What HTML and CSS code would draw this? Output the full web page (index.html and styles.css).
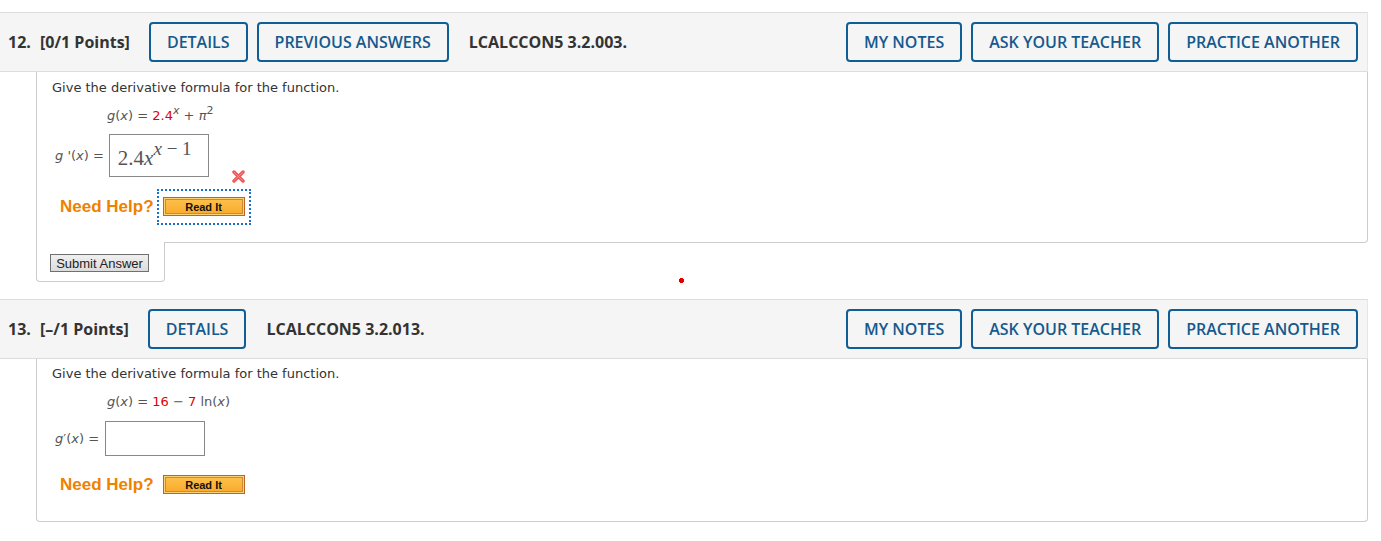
FILE: index.html
```html
<!DOCTYPE html>
<html>
<head>
<meta charset="utf-8">
<link rel="stylesheet" href="styles.css">
</head>
<body>
<div class="page">
  <div class="question">
    <div class="qhead">
      <span class="qnum">12.</span>
      <span class="qpts">[0/1 Points]</span>
      <div class="btns">
        <a class="btn">DETAILS</a>
        <a class="btn">PREVIOUS ANSWERS</a>
      </div>
      <span class="qcode">LCALCCON5 3.2.003.</span>
      <div class="btns right">
        <a class="btn">MY NOTES</a>
        <a class="btn">ASK YOUR TEACHER</a>
        <a class="btn">PRACTICE ANOTHER</a>
      </div>
    </div>
    <div class="qbody has-submit">
      <p class="intro">Give the derivative formula for the function.</p>
      <p class="formula"><i>g</i>(<i>x</i>) = <span class="red">2.4</span><sup><i>x</i></sup> + <i>π</i><sup>2</sup></p>
      <div class="answer first">
        <span class="label"><i>g</i> '(<i>x</i>) =</span>
        <span class="input tall"><span class="math">2.4<i>x</i><sup><i>x</i> − 1</sup></span></span>
        <svg class="wrong" width="13" height="13" viewBox="0 0 13 13">
          <path d="M2 2 L11 11 M11 2 L2 11" stroke="#ee5656" stroke-width="3.4" stroke-linecap="round"/>
          <path d="M2.3 2.3 L10.5 10.5 M10.5 2.3 L2.3 10.5" stroke="#f88a8a" stroke-width="1" stroke-linecap="round"/>
        </svg>
      </div>
      <div class="help first">
        <span class="needhelp">Need Help?</span>
        <span class="readlink focused"><span class="readit">Read It</span></span>
      </div>
    </div>
    <div class="submit-tab">
      <button class="submit">Submit Answer</button>
    </div>
  </div>

  <div class="question second">
    <div class="qhead">
      <span class="qnum">13.</span>
      <span class="qpts">[–/1 Points]</span>
      <div class="btns">
        <a class="btn">DETAILS</a>
      </div>
      <span class="qcode">LCALCCON5 3.2.013.</span>
      <div class="btns right">
        <a class="btn">MY NOTES</a>
        <a class="btn">ASK YOUR TEACHER</a>
        <a class="btn">PRACTICE ANOTHER</a>
      </div>
    </div>
    <div class="qbody last">
      <p class="intro">Give the derivative formula for the function.</p>
      <p class="formula"><i>g</i>(<i>x</i>) = <span class="red">16</span> − <span class="red">7</span> ln(<i>x</i>)</p>
      <div class="answer">
        <span class="label"><i>g</i>′(<i>x</i>) =</span>
        <span class="input short"></span>
      </div>
      <div class="help">
        <span class="needhelp">Need Help?</span>
        <span class="readlink"><span class="readit">Read It</span></span>
      </div>
    </div>
  </div>
</div>
<span class="cursor-dot"></span>
</body>
</html>
```

FILE: styles.css
```css
* { box-sizing: border-box; }
html, body { margin: 0; padding: 0; background: #fff; }
body { position: relative; }
.page { width: 1368px; padding-top: 12px; }

.question.second { margin-top: 17px; }

.qhead {
  display: flex;
  align-items: center;
  height: 60px;
  background: #f5f5f5;
  border-top: 1px solid #dddddd;
  border-bottom: 1px solid #dddddd;
  border-right: 1px solid #e6e6e6;
  padding: 0 9px 0 8px;
  font-family: "Open Sans", sans-serif;
  color: #333;
}
.qnum { font-weight: 700; font-size: 16px; width: 32px; }
.qpts { font-weight: 700; font-size: 16px; margin-right: 19px; }
.qcode { font-weight: 700; font-size: 16px; color: #333; margin-left: 20px; }
.btns { display: flex; gap: 9px; }
.btns.right { margin-left: auto; }
.btn {
  display: flex;
  align-items: center;
  height: 40px;
  padding: 0 16px;
  border: 2px solid #0f5f96;
  border-radius: 4px;
  color: #17598c;
  font-size: 16px;
  font-weight: 600;
  background: #f5f5f5;
}

.qbody {
  margin-left: 36px;
  border: 1px solid #cccccc;
  border-top: none;
  padding: 8px 15px 17px 15px;
  font-family: "DejaVu Sans", Verdana, sans-serif;
  font-size: 13px;
  color: #333;
  background: #fff;
}
.qbody.has-submit { border-bottom-right-radius: 4px; }
.qbody.last { border-radius: 0 0 4px 4px; padding-bottom: 18px; }
.question.second .qbody { padding-top: 7px; }

.intro { margin: 0; line-height: 16px; color: #333; }
.formula {
  margin: 11px 0 0 55px;
  line-height: 18px;
  color: #555;
}
.formula i { font-style: italic; }
.formula sup { font-size: 11px; line-height: 0; vertical-align: 6px; }
.red { color: #e00000; }

.answer {
  display: flex;
  align-items: center;
  margin-top: 10px;
  color: #555;
}
.answer.first { margin-top: 9px; }
.label { margin-left: 3px; margin-right: 5px; }
.label i { font-style: italic; }
.answer .label + .input.short { margin-left: 1px; }
.input {
  display: flex;
  align-items: center;
  border: 1px solid #888;
  background: #fff;
}
.input.tall { width: 100px; height: 43px; padding-left: 8px; }
.input.short { width: 100px; height: 35px; }
.math {
  font-family: "Liberation Serif", "Times New Roman", serif;
  font-size: 21px;
  color: #555;
  margin-top: 6px;
  white-space: nowrap;
}
.math sup { font-size: 19px; line-height: 0; vertical-align: 10px; }
.wrong {
  align-self: flex-end;
  margin: 0 0 -6px 23px;
  flex: none;
}

.help {
  display: flex;
  align-items: center;
  margin-top: 11px;
}
.help.first { margin-top: 12px; }
.needhelp {
  margin-left: 8px;
  font-family: "Liberation Sans", Arial, sans-serif;
  font-weight: 700;
  font-size: 17px;
  color: #ee8200;
}
.readlink {
  margin-left: 3px;
  border: 2px dotted transparent;
  padding: 6px 4px 7px 4px;
  display: flex;
}
.readlink.focused { border-color: #1a6fd0; }
.readit {
  display: flex;
  align-items: center;
  justify-content: center;
  width: 82px;
  height: 19px;
  border: 1px solid #c0661c;
  box-shadow: inset 0 0 0 1px #fcd17a, inset 0 0 0 2px #c98a3a;
  background: linear-gradient(#fdc24d, #f9a92a);
  font-family: "Liberation Sans", Arial, sans-serif;
  font-weight: 700;
  font-size: 11px;
  color: #111;
}

.submit-tab {
  margin-left: 36px;
  margin-top: -1px;
  width: 129px;
  height: 40px;
  border: 1px solid #cccccc;
  border-top: none;
  border-radius: 0 0 4px 4px;
  background: #fff;
  padding: 12px 0 0 13px;
  position: relative;
}
.submit {
  display: block;
  width: 99px;
  height: 18px;
  padding: 0;
  border: 1px solid #707070;
  background: linear-gradient(#f0f0f0, #dcdcdc);
  font-family: "Liberation Sans", Arial, sans-serif;
  font-size: 13px;
  color: #222;
}

.cursor-dot {
  position: absolute;
  left: 679px;
  top: 278px;
  width: 5px;
  height: 5px;
  background:
    linear-gradient(#e00000, #e00000) center / 5px 3px no-repeat,
    linear-gradient(#e00000, #e00000) center / 3px 5px no-repeat;
}
```
